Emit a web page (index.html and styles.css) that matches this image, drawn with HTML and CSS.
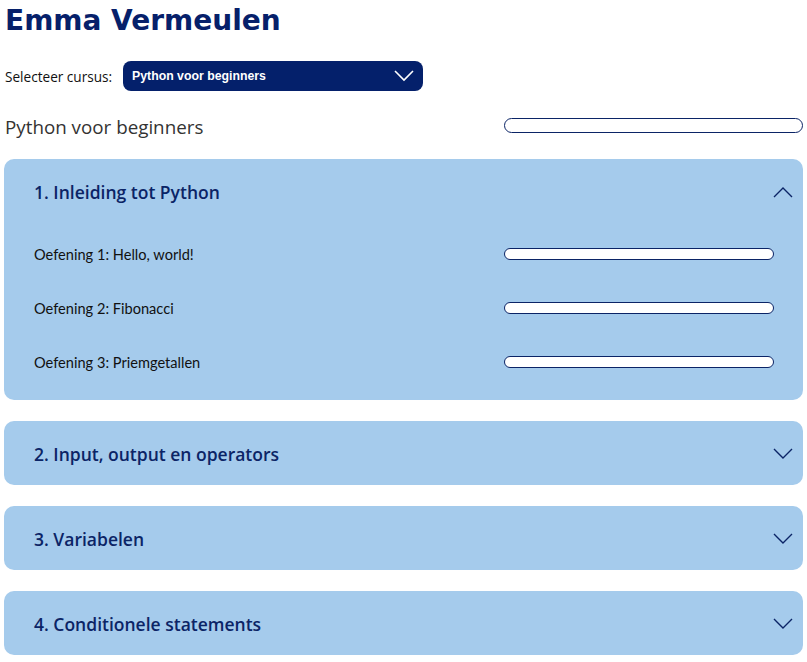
FILE: index.html
```html
<!DOCTYPE html>
<html lang="nl">
<head>
<meta charset="utf-8">
<title>Emma Vermeulen</title>
<link rel="stylesheet" href="styles.css">
</head>
<body>
<main class="page">
  <h1 class="name">Emma Vermeulen</h1>

  <div class="course-select">
    <label class="select-label" for="cursus">Selecteer cursus:</label>
    <div class="select-box" id="cursus">
      <span class="select-value">Python voor beginners</span>
      <svg class="select-chevron" width="20" height="12" viewBox="0 0 20 12"><path d="M1 1 L10 10 L19 1" fill="none" stroke="#fff" stroke-width="1.6"/></svg>
    </div>
  </div>

  <div class="course-head">
    <h2 class="course-title">Python voor beginners</h2>
    <div class="progress progress-lg"></div>
  </div>

  <section class="chapter open">
    <div class="chapter-head">
      <h3 class="chapter-title">1. Inleiding tot Python</h3>
      <svg class="chevron" width="20" height="12" viewBox="0 0 20 12"><path d="M1 11 L10 2 L19 11" fill="none" stroke="#0b2466" stroke-width="1.4"/></svg>
    </div>
    <ul class="exercises">
      <li class="exercise"><span class="ex-name">Oefening 1: Hello, world!</span><div class="progress progress-sm"></div></li>
      <li class="exercise"><span class="ex-name">Oefening 2: Fibonacci</span><div class="progress progress-sm"></div></li>
      <li class="exercise"><span class="ex-name">Oefening 3: Priemgetallen</span><div class="progress progress-sm"></div></li>
    </ul>
  </section>

  <section class="chapter">
    <div class="chapter-head">
      <h3 class="chapter-title">2. Input, output en operators</h3>
      <svg class="chevron" width="20" height="12" viewBox="0 0 20 12"><path d="M1 1 L10 10 L19 1" fill="none" stroke="#0b2466" stroke-width="1.4"/></svg>
    </div>
  </section>

  <section class="chapter">
    <div class="chapter-head">
      <h3 class="chapter-title">3. Variabelen</h3>
      <svg class="chevron" width="20" height="12" viewBox="0 0 20 12"><path d="M1 1 L10 10 L19 1" fill="none" stroke="#0b2466" stroke-width="1.4"/></svg>
    </div>
  </section>

  <section class="chapter">
    <div class="chapter-head">
      <h3 class="chapter-title">4. Conditionele statements</h3>
      <svg class="chevron" width="20" height="12" viewBox="0 0 20 12"><path d="M1 1 L10 10 L19 1" fill="none" stroke="#0b2466" stroke-width="1.4"/></svg>
    </div>
  </section>
</main>
</body>
</html>
```

FILE: styles.css
```css
* { box-sizing: border-box; }

body {
  margin: 0;
  background: #ffffff;
  font-family: "Open Sans", "Noto Sans", sans-serif;
  color: #111;
}

.page {
  padding: 0 4px 0 4px;
  width: 807px;
}

.name {
  margin: 0;
  padding-top: 3px;
  height: 42px;
  font-family: "DejaVu Sans", "Noto Sans", sans-serif;
  font-weight: 700;
  font-size: 28px;
  line-height: 36px;
  color: #06206a;
  padding-left: 1px;
}

.course-select {
  display: flex;
  align-items: center;
  height: 30px;
  margin-top: 19px;
  padding-left: 1px;
}

.select-label {
  font-family: "Open Sans", sans-serif;
  font-size: 13.6px;
  color: #111;
  width: 118px;
}

.select-box {
  width: 300px;
  height: 30px;
  background: #04206b;
  border-radius: 8px;
  display: flex;
  align-items: center;
  justify-content: space-between;
  padding: 0 9px 0 9px;
}

.select-value {
  font-family: "Liberation Sans", Arial, sans-serif;
  font-weight: bold;
  font-size: 12.3px;
  color: #fff;
}

.course-head {
  display: flex;
  align-items: center;
  justify-content: space-between;
  height: 34px;
  margin-top: 17px;
}

.course-title {
  margin: 0;
  padding-top: 3px;
  font-family: "Open Sans", sans-serif;
  font-weight: 400;
  font-size: 18.8px;
  color: #333;
  padding-left: 1px;
}

.progress {
  border: 1px solid #0b2466;
  background: #fff;
  border-radius: 8px;
}

.progress-lg { width: 299px; height: 15px; }
.progress-sm { width: 270px; height: 12px; }

.chapter {
  background: #a5cbec;
  border-radius: 10px;
  margin-top: 21px;
  padding: 0 10px 0 30px;
}

.course-head + .chapter { margin-top: 17px; }

.chapter-head {
  display: flex;
  align-items: center;
  justify-content: space-between;
  height: 64px;
  padding-top: 2px;
}

.chapter.open .chapter-head { height: 66px; padding-top: 0; }

.chapter-title {
  margin: 0;
  font-family: "Open Sans", sans-serif;
  font-weight: 600;
  font-size: 17.5px;
  color: #0b2466;
}

.exercises {
  list-style: none;
  margin: 0;
  padding: 2px 0 11px 0;
}

.exercise {
  display: flex;
  align-items: center;
  justify-content: space-between;
  height: 54px;
  padding-right: 19px;
}

.ex-name {
  font-family: "Lato", sans-serif;
  font-size: 14.6px;
  color: #111;
}
```
